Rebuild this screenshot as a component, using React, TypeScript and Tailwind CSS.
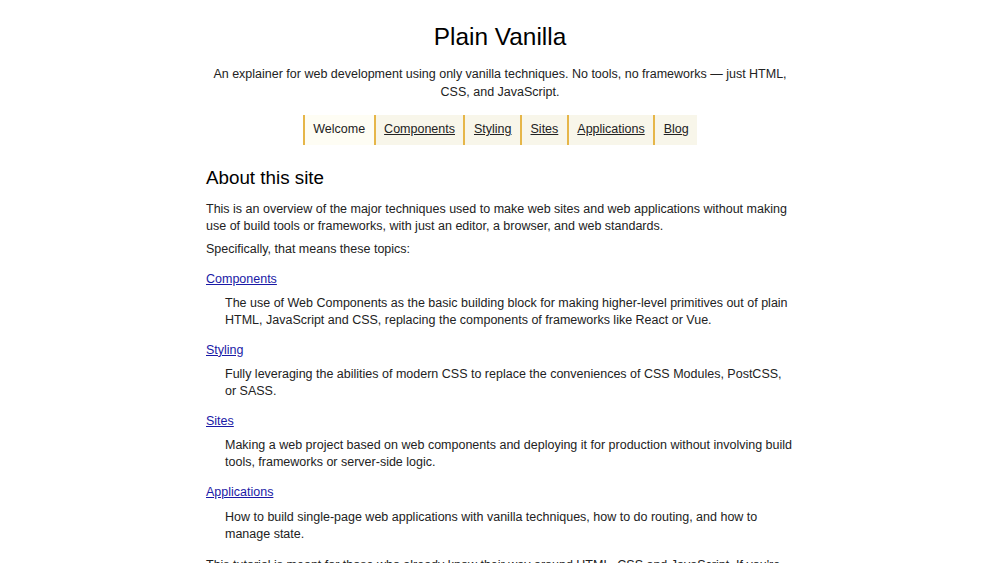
const navItems = ["Welcome", "Components", "Styling", "Sites", "Applications", "Blog"];

const topics = [
  {
    title: "Components",
    text: "The use of Web Components as the basic building block for making higher-level primitives out of plain HTML, JavaScript and CSS, replacing the components of frameworks like React or Vue.",
  },
  {
    title: "Styling",
    text: "Fully leveraging the abilities of modern CSS to replace the conveniences of CSS Modules, PostCSS, or SASS.",
  },
  {
    title: "Sites",
    text: "Making a web project based on web components and deploying it for production without involving build tools, frameworks or server-side logic.",
  },
  {
    title: "Applications",
    text: "How to build single-page web applications with vanilla techniques, how to do routing, and how to manage state.",
  },
];

export default function App() {
  return (
    <div className="min-h-screen bg-white text-[#222] font-['Liberation_Sans',Arial,sans-serif] text-[12.5px] leading-[17.5px]">
      <div className="max-w-[588px] mx-auto pt-[22px]">
        {/* Header */}
        <header className="text-center">
          <h1 className="text-[24.4px] leading-[30px] font-normal text-black">Plain Vanilla</h1>
          <p className="mt-[14px]">
            An explainer for web development using only vanilla techniques. No tools, no frameworks — just HTML,
            CSS, and JavaScript.
          </p>
          <nav className="mt-[14px] flex justify-center">
            {navItems.map((item, i) => (
              <a
                key={item}
                href="#"
                className={`border-l-2 border-[#e6b649] px-[8.5px] py-[6.25px] ${
                  i === 0 ? "bg-[#fefdf4] no-underline" : "bg-[#f8f6ea] underline"
                }`}
              >
                {item}
              </a>
            ))}
          </nav>
        </header>

        {/* About */}
        <main className="mt-[21px]">
          <h2 className="text-[18.8px] leading-[24px] text-black">About this site</h2>
          <p className="mt-[10.5px]">
            This is an overview of the major techniques used to make web sites and web applications without making
            use of build tools or frameworks, with just an editor, a browser, and web standards.
          </p>
          <p className="mt-[5.75px]">Specifically, that means these topics:</p>
          <dl className="mt-[3.5px]">
            {topics.map((t, i) => (
              <div key={t.title}>
                <dt className="mt-[12px]">
                  <a href="#" className="text-[#1a1aa6] underline">
                    {t.title}
                  </a>
                </dt>
                <dd className={`ml-[19px] ${i === 3 ? "mt-[7.5px]" : "mt-[6.5px]"}`}>{t.text}</dd>
              </div>
            ))}
          </dl>
          <p className="mt-[13px]">
            This tutorial is meant for those who already know their way around HTML, CSS and JavaScript. If you're
            just starting out learning web development, there are better resources available elsewhere.
          </p>
        </main>
      </div>
    </div>
  );
}
